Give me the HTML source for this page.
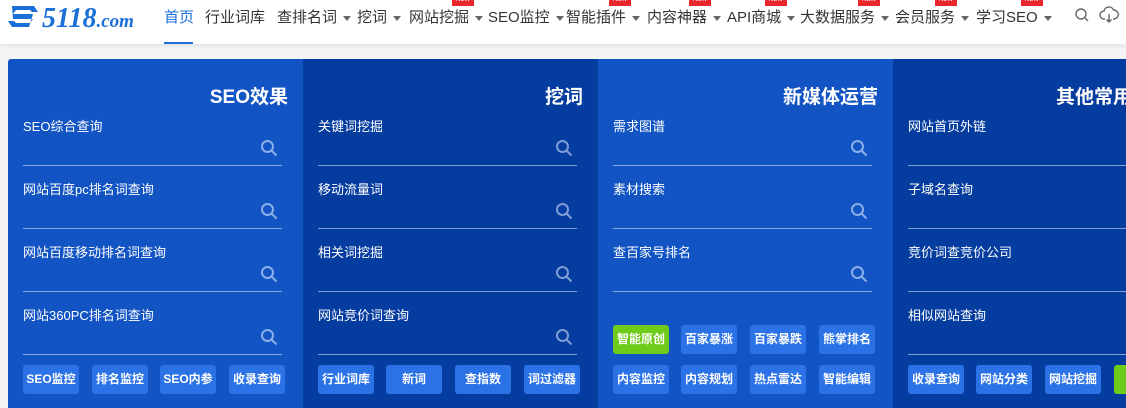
<!DOCTYPE html>
<html><head><meta charset="utf-8"><style>
*{margin:0;padding:0;box-sizing:border-box}
body{width:1126px;height:408px;overflow:hidden;background:#f4f5f7;font-family:"Liberation Sans","Noto Sans CJK SC",sans-serif;position:relative}
.hdr{position:absolute;left:0;top:0;width:1126px;height:44px;background:#fff;box-shadow:0 2px 5px rgba(0,0,0,.08)}
.nav{position:absolute;top:6px;font-size:15px;color:#333;white-space:nowrap}
.nav.act{color:#1a6fd8}
.car{display:inline-block;width:0;height:0;border-left:4px solid transparent;border-right:4px solid transparent;border-top:5px solid #666;vertical-align:middle;margin-left:6px}
.new{position:absolute;top:-9px;height:9px;width:22px;background:#e8262c;font-size:6px;color:#fff;text-align:center;line-height:6px;overflow:hidden}
.logo{position:absolute;left:5px;top:2px;font-family:"Liberation Serif",serif;font-style:italic;font-weight:bold;font-size:28px;color:#1a6fd8;white-space:nowrap}
.col{position:absolute;top:59px;width:295px;height:349px;color:#fff}
.c1,.c3{background:#1254c3}.c2,.c4{background:#053c9f}
.h{position:absolute;right:15px;top:23px;font-size:19px;font-weight:bold}
.row{position:absolute;left:15px;width:259px;height:50px;border-bottom:1px solid rgba(255,255,255,.5)}
.row span{position:absolute;left:0;top:0;font-size:13px}
.row svg{position:absolute;right:4px;top:23px}
.b{position:absolute;width:56px;height:29px;background:#2b72e6;border-radius:3px;font-size:12px;font-weight:bold;text-align:center;line-height:29px;color:#fff}
.g{background:#6fcb1a}
</style></head><body>
<div class="hdr">
<div class="logo"><svg width="36" height="30" viewBox="0 0 34 30" style="vertical-align:-5px;margin-right:1px"><path d="M6 4h22l4 6-6 0-2-2H10l-3 4h20l-4 13H6l-4-6h6l2 2h14l3-4H7z" fill="#1a6fd8"/></svg>5118<span style="font-size:19px">.com</span></div>
<div class="nav act" style="left:164px">首页</div>
<div style="position:absolute;left:164px;top:42px;width:29px;height:2px;background:#1a6fd8"></div>
<div class="nav" style="left:205px">行业词库</div>
<div class="nav" style="left:277px">查排名词<i class="car"></i></div>
<div class="nav" style="left:357px">挖词<i class="car"></i></div>
<div class="nav" style="left:409px">网站挖掘<i class="car"></i><div class="new" style="left:43px">NEW</div></div>
<div class="nav" style="left:488px">SEO监控<i class="car"></i></div>
<div class="nav" style="left:566px">智能插件<i class="car"></i><div class="new" style="left:43px">NEW</div></div>
<div class="nav" style="left:647px">内容神器<i class="car"></i><div class="new" style="left:42px">NEW</div></div>
<div class="nav" style="left:727px">API商城<i class="car"></i><div class="new" style="left:38px">NEW</div></div>
<div class="nav" style="left:800px">大数据服务<i class="car"></i><div class="new" style="left:58px">NEW</div></div>
<div class="nav" style="left:895px">会员服务<i class="car"></i><div class="new" style="left:40px">NEW</div></div>
<div class="nav" style="left:976px">学习SEO<i class="car"></i><div class="new" style="left:45px">NEW</div></div>
<svg style="position:absolute;left:1074px;top:7px" width="16" height="16" viewBox="0 0 16 16"><circle cx="7" cy="7" r="5" fill="none" stroke="#666" stroke-width="1.4"/><path d="M11 11l3 3" stroke="#666" stroke-width="1.4"/></svg>
<svg style="position:absolute;left:1099px;top:5px" width="20" height="20" viewBox="0 0 20 20"><path d="M6 14H5a4 4 0 010-8 5 5 0 019.5-1A4 4 0 0115 14h-1M10 9v8M7.5 14.5L10 17l2.5-2.5" fill="none" stroke="#666" stroke-width="1.4"/></svg>
</div>

<div class="col c1" style="left:8px;border-top-left-radius:3px">
<div class="h">SEO效果</div>
<div class="row" style="top:57px"><span>SEO综合查询</span><svg width="18" height="18"><circle cx="7.5" cy="7.5" r="5.5" fill="none" stroke="#8aaee6" stroke-width="2"/><path d="M11.5 11.5l5 5" stroke="#8aaee6" stroke-width="2"/></svg></div>
<div class="row" style="top:120px"><span>网站百度pc排名词查询</span><svg width="18" height="18"><circle cx="7.5" cy="7.5" r="5.5" fill="none" stroke="#8aaee6" stroke-width="2"/><path d="M11.5 11.5l5 5" stroke="#8aaee6" stroke-width="2"/></svg></div>
<div class="row" style="top:183px"><span>网站百度移动排名词查询</span><svg width="18" height="18"><circle cx="7.5" cy="7.5" r="5.5" fill="none" stroke="#8aaee6" stroke-width="2"/><path d="M11.5 11.5l5 5" stroke="#8aaee6" stroke-width="2"/></svg></div>
<div class="row" style="top:246px"><span>网站360PC排名词查询</span><svg width="18" height="18"><circle cx="7.5" cy="7.5" r="5.5" fill="none" stroke="#8aaee6" stroke-width="2"/><path d="M11.5 11.5l5 5" stroke="#8aaee6" stroke-width="2"/></svg></div>
<div class="b" style="left:15px;top:306px">SEO监控</div><div class="b" style="left:84px;top:306px">排名监控</div><div class="b" style="left:152px;top:306px">SEO内参</div><div class="b" style="left:221px;top:306px">收录查询</div>
</div>

<div class="col c2" style="left:303px">
<div class="h">挖词</div>
<div class="row" style="top:57px"><span>关键词挖掘</span><svg width="18" height="18"><circle cx="7.5" cy="7.5" r="5.5" fill="none" stroke="#7f9dd4" stroke-width="2"/><path d="M11.5 11.5l5 5" stroke="#7f9dd4" stroke-width="2"/></svg></div>
<div class="row" style="top:120px"><span>移动流量词</span><svg width="18" height="18"><circle cx="7.5" cy="7.5" r="5.5" fill="none" stroke="#7f9dd4" stroke-width="2"/><path d="M11.5 11.5l5 5" stroke="#7f9dd4" stroke-width="2"/></svg></div>
<div class="row" style="top:183px"><span>相关词挖掘</span><svg width="18" height="18"><circle cx="7.5" cy="7.5" r="5.5" fill="none" stroke="#7f9dd4" stroke-width="2"/><path d="M11.5 11.5l5 5" stroke="#7f9dd4" stroke-width="2"/></svg></div>
<div class="row" style="top:246px"><span>网站竞价词查询</span><svg width="18" height="18"><circle cx="7.5" cy="7.5" r="5.5" fill="none" stroke="#7f9dd4" stroke-width="2"/><path d="M11.5 11.5l5 5" stroke="#7f9dd4" stroke-width="2"/></svg></div>
<div class="b" style="left:15px;top:306px">行业词库</div><div class="b" style="left:83px;top:306px">新词</div><div class="b" style="left:152px;top:306px">查指数</div><div class="b" style="left:221px;top:306px">词过滤器</div>
</div>

<div class="col c3" style="left:598px">
<div class="h">新媒体运营</div>
<div class="row" style="top:57px"><span>需求图谱</span><svg width="18" height="18"><circle cx="7.5" cy="7.5" r="5.5" fill="none" stroke="#8aaee6" stroke-width="2"/><path d="M11.5 11.5l5 5" stroke="#8aaee6" stroke-width="2"/></svg></div>
<div class="row" style="top:120px"><span>素材搜索</span><svg width="18" height="18"><circle cx="7.5" cy="7.5" r="5.5" fill="none" stroke="#8aaee6" stroke-width="2"/><path d="M11.5 11.5l5 5" stroke="#8aaee6" stroke-width="2"/></svg></div>
<div class="row" style="top:183px"><span>查百家号排名</span><svg width="18" height="18"><circle cx="7.5" cy="7.5" r="5.5" fill="none" stroke="#8aaee6" stroke-width="2"/><path d="M11.5 11.5l5 5" stroke="#8aaee6" stroke-width="2"/></svg></div>
<div class="b g" style="left:15px;top:266px">智能原创</div><div class="b" style="left:83px;top:266px">百家暴涨</div><div class="b" style="left:152px;top:266px">百家暴跌</div><div class="b" style="left:221px;top:266px">熊掌排名</div>
<div class="b" style="left:15px;top:306px">内容监控</div><div class="b" style="left:83px;top:306px">内容规划</div><div class="b" style="left:152px;top:306px">热点雷达</div><div class="b" style="left:221px;top:306px">智能编辑</div>
</div>

<div class="col c4" style="left:893px;width:233px">
<div class="h" style="right:auto;left:163px;white-space:nowrap">其他常用</div>
<div class="row" style="top:57px;width:230px"><span>网站首页外链</span></div>
<div class="row" style="top:120px;width:230px"><span>子域名查询</span></div>
<div class="row" style="top:183px;width:230px"><span>竞价词查竞价公司</span></div>
<div class="row" style="top:246px;width:230px"><span>相似网站查询</span></div>
<div class="b" style="left:15px;top:306px">收录查询</div><div class="b" style="left:83px;top:306px">网站分类</div><div class="b" style="left:152px;top:306px">网站挖掘</div><div class="b g" style="left:221px;top:306px">站</div>
</div>
</body></html>
